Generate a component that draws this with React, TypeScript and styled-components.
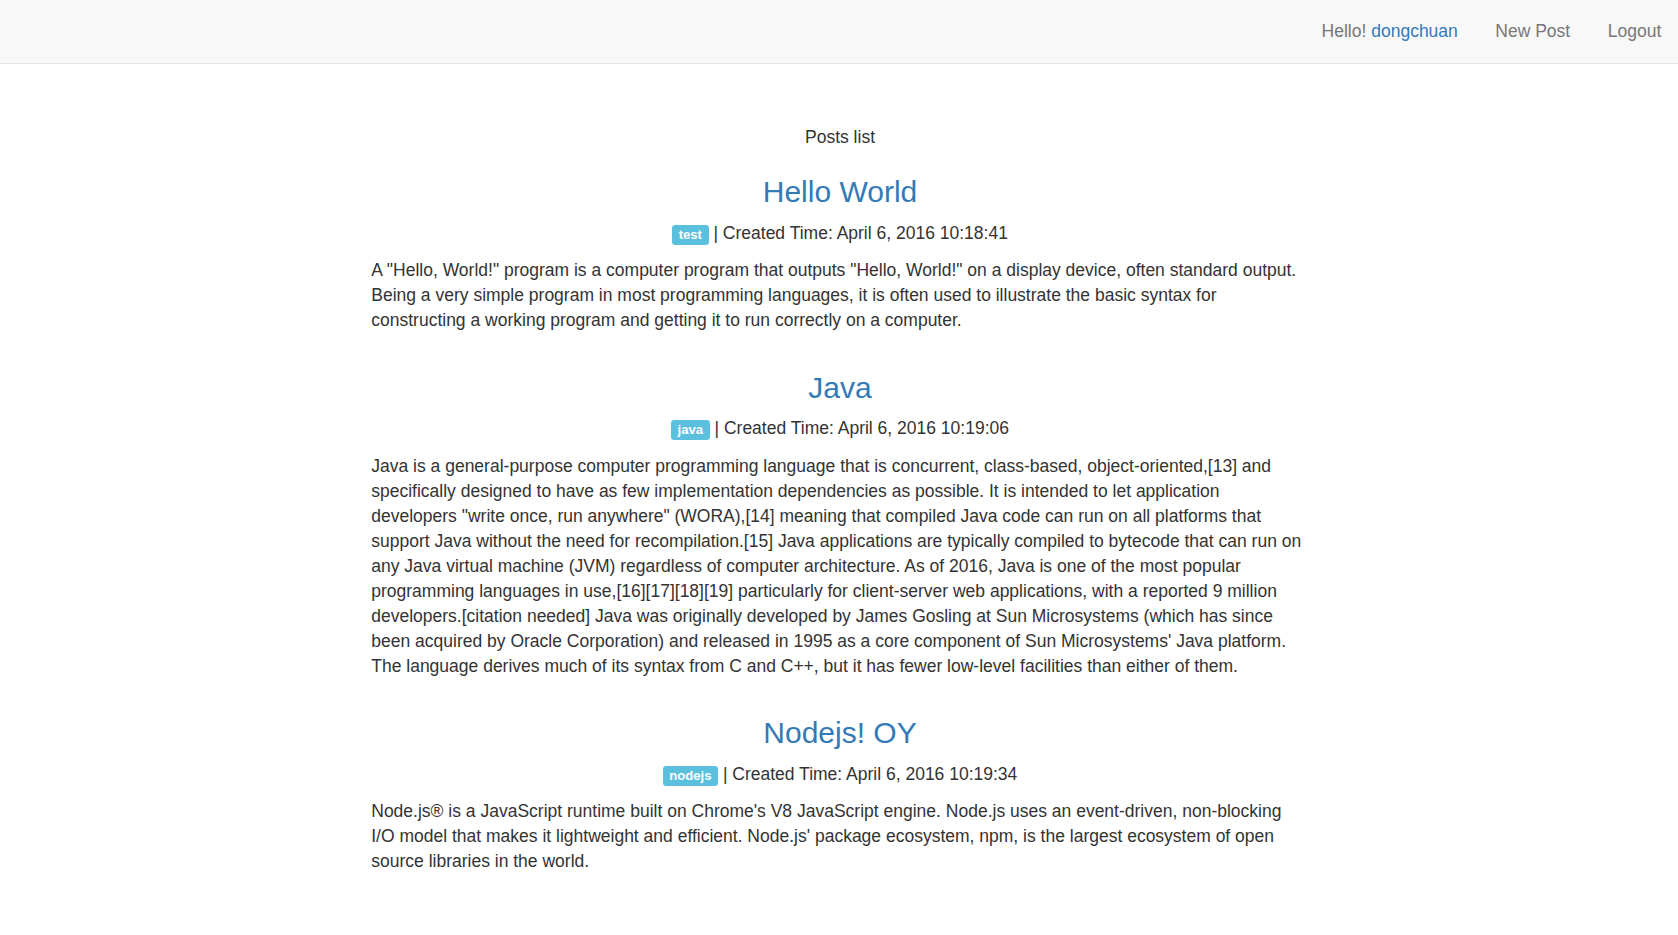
import React from "react";
import styled, { createGlobalStyle } from "styled-components";

const GlobalStyle = createGlobalStyle`
  html, body { margin: 0; padding: 0; background: #fff; }
  body {
    font-family: "Liberation Sans", Arial, Helvetica, sans-serif;
    font-size: 17.5px;
    line-height: 1.42857;
    color: #333;
  }
  * { box-sizing: border-box; }
`;

const Navbar = styled.nav`
  height: 64px;
  background: #f8f8f8;
  border-bottom: 1px solid #e7e7e7;
  display: flex;
  justify-content: flex-end;
  padding: 0 0 0 18.75px;
`;

const NavList = styled.ul`
  list-style: none;
  margin: 0 -2px 0 0;
  padding: 0;
  display: flex;
`;

const NavItem = styled.li`
  padding: 19px 18.75px;
  line-height: 25px;
  color: #777;
  white-space: nowrap;
`;

const NavLink = styled.a<{ $accent?: boolean }>`
  color: ${(p) => (p.$accent ? "#337ab7" : "#777")};
  text-decoration: none;
  cursor: pointer;
`;

const Main = styled.main`
  width: 939.5px;
  margin: 0 auto;
  padding: 61px 0 0 2px;
`;

const Heading = styled.p`
  margin: 0;
  text-align: center;
  line-height: 25px;
`;

const Post = styled.article`
  display: flex;
  flex-direction: column;
  padding-top: 25px;
  & + & {
    padding-top: 37.5px;
  }
`;

const Title = styled.h3`
  margin: 0 0 12.5px;
  font-size: 30px;
  font-weight: 500;
  line-height: 33px;
  text-align: center;
  color: #337ab7;
`;

const Meta = styled.p`
  margin: 0 0 12.5px;
  text-align: center;
  line-height: 25px;
`;

const Badge = styled.span`
  display: inline-block;
  background: #5bc0de;
  color: #fff;
  font-size: 75%;
  font-weight: 700;
  line-height: 1;
  padding: 0.2em 0.5em 0.3em;
  border-radius: 0.25em;
  vertical-align: baseline;
`;

const Body = styled.p`
  margin: 0;
  line-height: 25px;
`;

const posts = [
  {
    title: "Hello World",
    tag: "test",
    time: "April 6, 2016 10:18:41",
    body: 'A "Hello, World!" program is a computer program that outputs "Hello, World!" on a display device, often standard output. Being a very simple program in most programming languages, it is often used to illustrate the basic syntax for constructing a working program and getting it to run correctly on a computer.',
  },
  {
    title: "Java",
    tag: "java",
    time: "April 6, 2016 10:19:06",
    body: 'Java is a general-purpose computer programming language that is concurrent, class-based, object-oriented,[13] and specifically designed to have as few implementation dependencies as possible. It is intended to let application developers "write once, run anywhere" (WORA),[14] meaning that compiled Java code can run on all platforms that support Java without the need for recompilation.[15] Java applications are typically compiled to bytecode that can run on any Java virtual machine (JVM) regardless of computer architecture. As of 2016, Java is one of the most popular programming languages in use,[16][17][18][19] particularly for client-server web applications, with a reported 9 million developers.[citation needed] Java was originally developed by James Gosling at Sun Microsystems (which has since been acquired by Oracle Corporation) and released in 1995 as a core component of Sun Microsystems\' Java platform. The language derives much of its syntax from C and C++, but it has fewer low-level facilities than either of them.',
  },
  {
    title: "Nodejs! OY",
    tag: "nodejs",
    time: "April 6, 2016 10:19:34",
    body: "Node.js® is a JavaScript runtime built on Chrome's V8 JavaScript engine. Node.js uses an event-driven, non-blocking I/O model that makes it lightweight and efficient. Node.js' package ecosystem, npm, is the largest ecosystem of open source libraries in the world.",
  },
];

export default function App() {
  return (
    <>
      <GlobalStyle />
      <Navbar>
        <NavList>
          <NavItem>
            Hello! <NavLink $accent>dongchuan</NavLink>
          </NavItem>
          <NavItem>
            <NavLink>New Post</NavLink>
          </NavItem>
          <NavItem>
            <NavLink>Logout</NavLink>
          </NavItem>
        </NavList>
      </Navbar>
      <Main>
        <Heading>Posts list</Heading>
        {posts.map((p) => (
          <Post key={p.title}>
            <Title>{p.title}</Title>
            <Meta>
              <Badge>{p.tag}</Badge> | Created Time: {p.time}
            </Meta>
            <Body>{p.body}</Body>
          </Post>
        ))}
      </Main>
    </>
  );
}
